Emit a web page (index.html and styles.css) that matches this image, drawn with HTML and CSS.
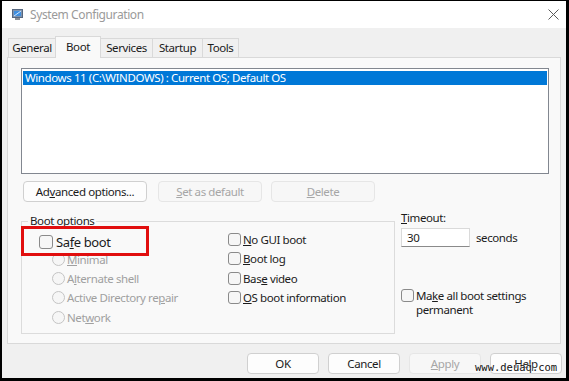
FILE: index.html
```html
<!DOCTYPE html>
<html lang="en">
<head>
    <meta charset="UTF-8">
    <title>System Configuration</title>
    <link rel="stylesheet" href="styles.css">
</head>
<body>
    <div class="window">
        <div class="titlebar">
            <svg class="app-icon" viewBox="0 0 11 11">
                <rect x="0.5" y="0.5" width="10" height="8" fill="#7f93ad" stroke="#56677f"/>
                <rect x="2" y="2" width="7" height="5" fill="#3f8fe0"/>
                <path d="M2 7 L9 2" stroke="#cfe6ff" stroke-width="1"/>
                <rect x="3" y="9" width="5" height="2" fill="#8a8f96"/>
            </svg>
            <span class="title">System Configuration</span>
            <svg class="close" viewBox="0 0 11 11">
                <path d="M0.5 0.5 L10.5 10.5 M10.5 0.5 L0.5 10.5" stroke="#5a5a5a" stroke-width="1"/>
            </svg>
        </div>

        <div class="tabs">
            <div class="tab tab-general">General</div>
            <div class="tab tab-boot active">Boot</div>
            <div class="tab tab-services">Services</div>
            <div class="tab tab-startup">Startup</div>
            <div class="tab tab-tools">Tools</div>
        </div>

        <div class="panel">
            <div class="os-list">
                <div class="os-item selected">Windows 11 (C:\WINDOWS) : Current OS; Default OS</div>
            </div>

            <div class="list-buttons">
                <button class="btn btn-advanced">Ad<u>v</u>anced options...</button>
                <button class="btn btn-default" disabled><u>S</u>et as default</button>
                <button class="btn btn-delete" disabled><u>D</u>elete</button>
            </div>

            <div class="options">
                <fieldset class="boot-options">
                    <legend>Boot options</legend>
                    <div class="opt-cols">
                        <div class="col-left">
                            <div class="check safe"><span class="box"></span><span>Sa<u>f</u>e boot</span></div>
                            <div class="radio"><span class="circle"></span><span><u>M</u>inimal</span></div>
                            <div class="radio"><span class="circle"></span><span>A<u>l</u>ternate shell</span></div>
                            <div class="radio"><span class="circle"></span><span>Active Directory re<u>p</u>air</span></div>
                            <div class="radio"><span class="circle"></span><span>Net<u>w</u>ork</span></div>
                        </div>
                        <div class="col-right">
                            <div class="check"><span class="box"></span><span><u>N</u>o GUI boot</span></div>
                            <div class="check"><span class="box"></span><span><u>B</u>oot log</span></div>
                            <div class="check"><span class="box"></span><span>Bas<u>e</u> video</span></div>
                            <div class="check"><span class="box"></span><span><u>O</u>S boot information</span></div>
                        </div>
                    </div>
                </fieldset>

                <div class="timeout">
                    <div class="timeout-label"><u>T</u>imeout:</div>
                    <div class="timeout-row">
                        <div class="timeout-input">30</div>
                        <span>seconds</span>
                    </div>
                    <div class="check permanent"><span class="box"></span><span>Ma<u>k</u>e all boot settings<br>permanent</span></div>
                </div>

                <div class="highlight"></div>
            </div>
        </div>

        <div class="footer">
            <button class="btn btn-footer">OK</button>
            <button class="btn btn-footer">Cancel</button>
            <button class="btn btn-footer" disabled><u>A</u>pply</button>
            <button class="btn btn-footer btn-help">Help</button>
        </div>

        <div class="watermark">www.deuaq.com</div>
    </div>
</body>
</html>
```

FILE: styles.css
```css
* {
    box-sizing: border-box;
}
body {
    margin: 0;
    font-family: "Noto Sans", sans-serif;
    font-size: 11.5px;
    letter-spacing: -0.4px;
    color: #1b1b1b;
}
u {
    text-underline-offset: 1px;
}
.window {
    position: relative;
    width: 569px;
    height: 381px;
    border-style: solid;
    border-color: #000;
    border-width: 1px 3px 3px 2px;
    background-color: #f0f0f0;
    overflow: hidden;
}

/* title bar */
.titlebar {
    height: 27px;
    background-color: #fff;
    display: flex;
    align-items: center;
}
.app-icon {
    width: 11px;
    height: 11px;
    margin-left: 10px;
}
.title {
    margin-left: 7px;
    color: #9a9a9a;
    font-size: 12px;
}
.close {
    width: 11px;
    height: 11px;
    margin-left: auto;
    margin-right: 7px;
}

/* tabs */
.tabs {
    display: flex;
    align-items: flex-end;
    height: 29px;
    padding-left: 6px;
}
.tab {
    height: 19px;
    line-height: 18px;
    text-align: center;
    border: 1px solid #d9d9d9;
    border-bottom: none;
    margin-right: -1px;
    background-color: #f0f0f0;
}
.tab.active {
    position: relative;
    z-index: 1;
    height: 22px;
    line-height: 20px;
    margin-bottom: -1px;
    background-color: #f9f9f9;
}
.tab-general { width: 48px; }
.tab-boot { width: 46px; }
.tab-services { width: 53px; }
.tab-startup { width: 51px; }
.tab-tools { width: 37px; }

/* panel */
.panel {
    height: 287px;
    margin: 0 5px;
    padding: 10px 11px 0 13px;
    border: 1px solid #d9d9d9;
    background-color: #f9f9f9;
}
.os-list {
    height: 106px;
    padding: 2px 1px;
    border: 1px solid #828790;
    background-color: #fff;
}
.os-item {
    height: 14px;
    line-height: 14px;
    padding-left: 2px;
}
.os-item.selected {
    background-color: #0078d7;
    color: #fff;
}

/* buttons */
.btn {
    height: 21px;
    padding: 0;
    font: inherit;
    letter-spacing: inherit;
    color: inherit;
    border: 1px solid #d0d0d0;
    border-radius: 4px;
    background-color: #fdfdfd;
}
.btn:disabled {
    color: #a6a6a6;
    border-color: #e6e6e6;
    background-color: #f7f7f7;
}
.list-buttons {
    display: flex;
    margin-top: 7px;
    padding-left: 2px;
}
.btn-advanced { width: 124px; }
.btn-default { width: 104px; margin-left: 11px; }
.btn-delete { width: 104px; margin-left: 9px; }

/* options */
.options {
    position: relative;
    display: flex;
}
.boot-options {
    width: 374px;
    min-width: 0;
    margin: 11px 0 0 0;
    padding: 0 0 6px 0;
    border: 1px solid #dcdcdc;
}
.boot-options legend {
    margin-left: 6px;
    padding: 0 2px;
    line-height: 16px;
}
.opt-cols {
    display: grid;
    grid-template-columns: 206px 1fr;
}
.col-left {
    padding: 4px 0 0 17px;
}
.col-right {
    padding-top: 1px;
}
.check, .radio {
    display: flex;
    align-items: center;
    height: 19.33px;
}
.box {
    flex: none;
    width: 13px;
    height: 13px;
    margin-right: 2px;
    border: 1px solid #8a8a8a;
    border-radius: 3px;
    background-color: #f6f6f6;
}
.check.safe {
    height: 17px;
    font-size: 13px;
}
.check.safe .box {
    width: 14px;
    height: 14px;
    margin-right: 3px;
}
.radio {
    height: 19.2px;
    padding-left: 13px;
    color: #a0a0a0;
}
.circle {
    flex: none;
    width: 13px;
    height: 13px;
    margin-right: 2px;
    border: 1px solid #c4c4c4;
    border-radius: 50%;
    background-color: #f6f6f6;
}

/* timeout */
.timeout {
    margin-left: 6px;
    padding-top: 8px;
}
.timeout-label {
    line-height: 16px;
}
.timeout-row {
    display: flex;
    align-items: center;
    margin-top: 2px;
}
.timeout-input {
    width: 69px;
    height: 19px;
    line-height: 18px;
    padding-left: 5px;
    border: 1px solid #dadada;
    border-bottom-color: #8a8a8a;
    background-color: #fff;
    margin-right: 6px;
}
.check.permanent {
    align-items: flex-start;
    height: auto;
    margin-top: 42px;
    line-height: 13.5px;
}
.highlight {
    position: absolute;
    left: 0;
    top: 24px;
    width: 128px;
    height: 30px;
    border: 3px solid #e10e0e;
}

/* footer */
.footer {
    display: flex;
    justify-content: flex-end;
    gap: 9px;
    padding: 9px 4px 0 0;
}
.btn-footer { width: 72px; }

.watermark {
    position: absolute;
    left: 473px;
    top: 360px;
    font-family: "DejaVu Sans Mono", monospace;
    font-size: 10.5px;
    letter-spacing: 0;
    color: #111;
    text-shadow: 0 0 2px #fff, 0 0 2px #fff;
}
```
